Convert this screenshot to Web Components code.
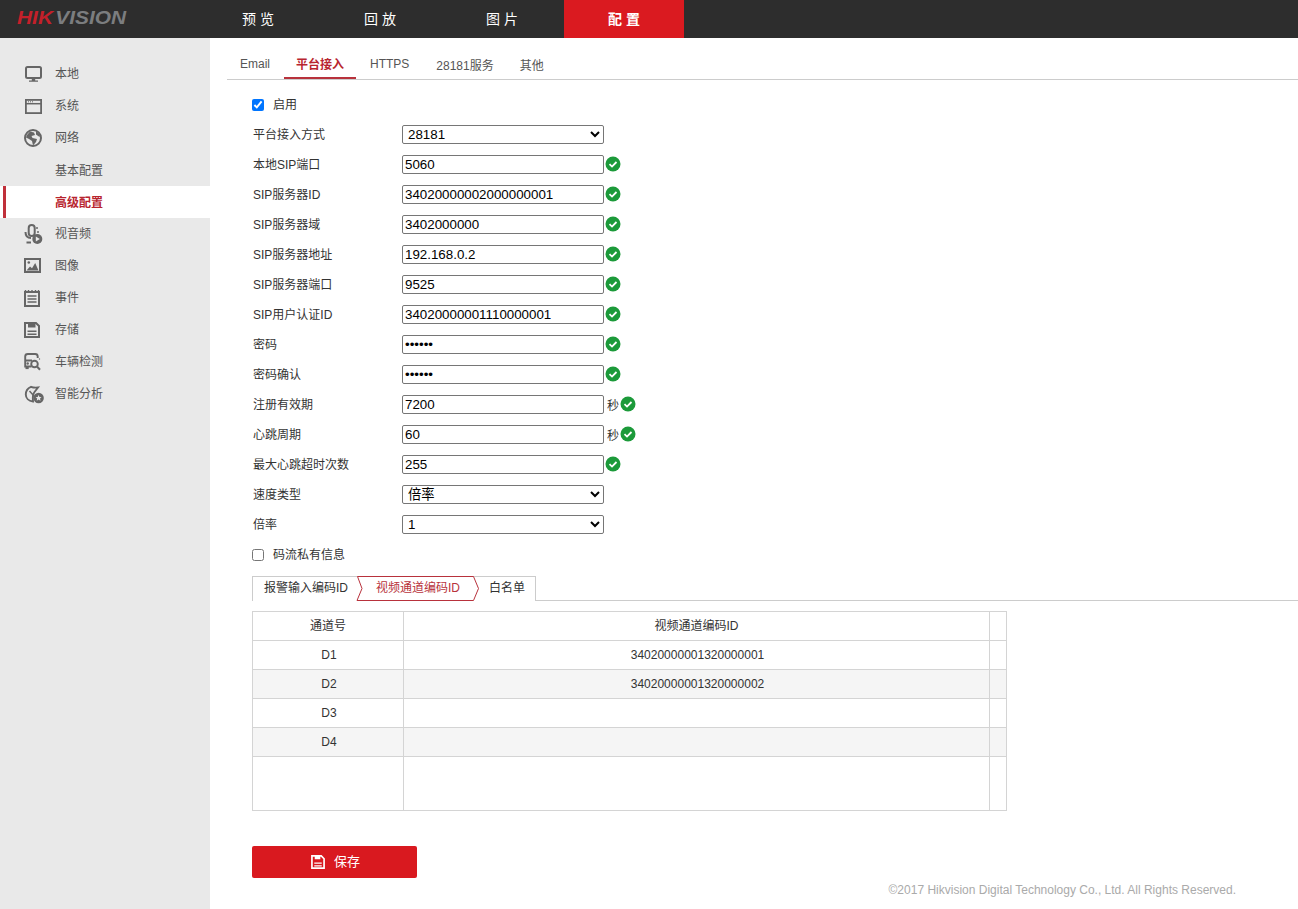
<!DOCTYPE html>
<html lang="zh">
<head>
<meta charset="utf-8">
<title>配置</title>
<style>
  html, body { margin: 0; height: 100%; background: #fff; overflow: hidden; }
  body {
    font: 12px "Liberation Sans", "Noto Sans CJK SC", sans-serif;
    color: #333;
  }
</style>
</head>
<body>
<hk-app></hk-app>

<script>
const ICONS = {
  local: `<rect x="2" y="5" width="15" height="11" rx="1.5" fill="none" stroke="#666" stroke-width="2"/><path d="M7.800 17h3.400v1.500H7.800zM5 18.400h9v1.400H5z" fill="#666"/>`,
  system: `<rect x="1.900" y="5.900" width="15.200" height="13.200" fill="none" stroke="#666" stroke-width="1.800"/><path d="M2 9.700h15" stroke="#666" stroke-width="1.500"/><path d="M4 7.800h1M6 7.800h1M8 7.800h1" stroke="#666"/>`,
  network: `<circle cx="9" cy="12" r="8" fill="none" stroke="#666" stroke-width="2"/><path d="M3 9l3-3.500 4 1 1 2.500-3.500 1 1 2 4.500 1-1 3-3 3.500-1-4.500-3-2-3-1.500zM12 5l4 3.500-.5 2.500-3.500-2.500z" fill="#666"/>`,
  av: `<rect x="4.700" y="2" width="6" height="11" rx="3" fill="none" stroke="#666" stroke-width="2"/><path d="M1.500 9c0 4.500 2.500 6 5.500 6M2.500 19.500H7" fill="none" stroke="#666" stroke-width="2"/><circle cx="13" cy="5" r="1" fill="#666"/><circle cx="14" cy="9" r="1" fill="#666"/><circle cx="13.300" cy="16" r="5" fill="#666"/><path d="M11.800 13.400v5.200l4-2.600z" fill="#e9e9e9"/>`,
  image: `<rect x="1" y="4" width="15" height="13" fill="none" stroke="#666" stroke-width="2"/><path d="M2.500 15.500l3.500-4 2 1.800 3.200-5.300 3.300 7.500z" fill="#666"/><circle cx="4.800" cy="7.500" r="1.300" fill="#666"/>`,
  event: `<rect x="1" y="5" width="14" height="14" fill="none" stroke="#666" stroke-width="2"/><path d="M3.500 9h9M3.500 12h9M3.500 15h9" stroke="#666" stroke-width="1.400"/><path d="M1.500 3v2M4.500 3v2M8 3v2M11.500 3v2M14.500 3v2" stroke="#666" stroke-width="1.400"/>`,
  storage: `<path d="M1 4h11l3 3v11H1z" fill="none" stroke="#666" stroke-width="2"/><path d="M4 4h7.500v4.500H4zM3.500 11.500h9V13h-9zM3.500 14.500h9V16h-9z" fill="#666"/>`,
  vehicle: `<path d="M7.500 15.500H1.200V5.500C1.200 4 2.400 3 3.800 3h7.400c1.400 0 2.500 1 2.500 2.500V7M1.500 9.500H8" fill="none" stroke="#666" stroke-width="1.900"/><circle cx="3.700" cy="12.500" r="1.200" fill="#666"/><path d="M1.500 15.500h3.200v2.600H1.500z" fill="#666"/><circle cx="10.500" cy="13" r="3.300" fill="none" stroke="#666" stroke-width="1.900"/><path d="M13 15.500l3 3.200" stroke="#666" stroke-width="2"/><circle cx="15.500" cy="8" r=".7" fill="#666"/>`,
  smart: `<path d="M9 18.500C4.500 18 1.800 15 1.800 11.500 1.800 8 4 5 7 3.800c2.500 1 4.500 1 7 .7L10.500 9C9 11 8.500 14 9 18.500z" fill="none" stroke="#666" stroke-width="1.900"/><path d="M5.500 8l4.500 5" stroke="#666" stroke-width="1.500"/><circle cx="14.600" cy="15" r="5.200" fill="#666"/><path d="M14.600 12l.9 2 2.100.2-1.600 1.400.5 2.100-1.900-1.100-1.900 1.100.5-2.100-1.600-1.400 2.100-.2z" fill="#e9e9e9"/>`,
};

class HkApp extends HTMLElement {
  constructor() {
    super();
    this.attachShadow({ mode: 'open' }).innerHTML = `
      <style>
        :host { display: flex; flex-direction: column; height: 909px; }
        .body { display: flex; flex: 1; min-height: 0; }
      </style>
      <hk-header></hk-header>
      <div class="body">
        <hk-sidebar></hk-sidebar>
        <hk-content></hk-content>
      </div>`;
  }
}

class HkHeader extends HTMLElement {
  constructor() {
    super();
    const items = ['预览', '回放', '图片', '配置'];
    this.attachShadow({ mode: 'open' }).innerHTML = `
      <style>
        :host { display: flex; height: 38px; background: #2d2d2d; flex: none; }
        .logo {
          width: 198px; padding: 0 0 0 17px; box-sizing: border-box; flex: none;
          font: italic bold 18.500px/36px "Liberation Sans", sans-serif;
          color: #c4202a; white-space: nowrap;
        }
        .logo div { transform: scaleX(1.13); transform-origin: left center; }
        .logo span { color: #7b7d7f; margin-left: 2px; }
        nav { display: flex; gap: 2px; }
        a {
          width: 120px; box-sizing: border-box; padding-left: 4px; text-align: center; line-height: 38px;
          color: #fff; font-size: 14px; letter-spacing: 4px;
        }
        a.on { background: #da1a20; font-weight: bold; }
      </style>
      <div class="logo"><div>HIK<span>VISION</span></div></div>
      <nav>${items.map((t, i) => `<a class="${i === 3 ? 'on' : ''}">${t}</a>`).join('')}</nav>`;
  }
}

class HkSideItem extends HTMLElement {
  constructor() {
    super();
    const icon = this.getAttribute('icon');
    this.attachShadow({ mode: 'open' }).innerHTML = `
      <style>
        :host {
          display: flex; align-items: center; height: 32px; box-sizing: border-box;
          padding: 0 0 2px 55px; position: relative; color: #555; font-size: 12px;
        }
        :host([raised]) { padding-bottom: 4px; }
        :host([active]) { background: #fff; color: #b8252f; font-weight: bold; }
        :host([active])::before {
          content: ''; position: absolute; left: 3px; top: 0; bottom: 0; width: 3px; background: #c0303a;
        }
        svg { position: absolute; left: 24px; top: 5px; }
      </style>
      ${icon ? `<svg width="21" height="21" viewBox="0 0 21 21">${ICONS[icon]}</svg>` : ''}
      <slot></slot>`;
  }
}

class HkSidebar extends HTMLElement {
  constructor() {
    super();
    this.attachShadow({ mode: 'open' }).innerHTML = `
      <style>
        :host { display: block; width: 210px; flex: none; background: #e9e9e9; padding-top: 19px; box-sizing: border-box; }
        .sub { margin-top: 1px; }
      </style>
      <hk-side-item icon="local">本地</hk-side-item>
      <hk-side-item icon="system">系统</hk-side-item>
      <hk-side-item icon="network">网络</hk-side-item>
      <div class="sub">
        <hk-side-item>基本配置</hk-side-item>
        <hk-side-item active>高级配置</hk-side-item>
      </div>
      <hk-side-item raised icon="av">视音频</hk-side-item>
      <hk-side-item raised icon="image">图像</hk-side-item>
      <hk-side-item raised icon="event">事件</hk-side-item>
      <hk-side-item raised icon="storage">存储</hk-side-item>
      <hk-side-item raised icon="vehicle">车辆检测</hk-side-item>
      <hk-side-item raised icon="smart">智能分析</hk-side-item>`;
  }
}

class HkTabs extends HTMLElement {
  constructor() {
    super();
    this.attachShadow({ mode: 'open' }).innerHTML = `
      <style>
        :host { display: flex; height: 42px; margin-left: 17px; border-bottom: 1px solid #ccc; box-sizing: border-box; color: #555; }
        span { padding: 19px 13px 0 13px; box-sizing: border-box; height: 41px; white-space: nowrap; }
        .email { width: 57px; }
        .on { width: 72px; padding: 17px 0 0 12px; color: #b8252f; font-weight: bold; border-bottom: 2px solid #b8323c; }
        .https { padding-left: 14px; }
        .low { padding: 18px 13px 0 14px; }
        .last { padding-left: 13px; }
      </style>
      <span class="email">Email</span>
      <span class="on">平台接入</span>
      <span class="https">HTTPS</span>
      <span class="low">28181服务</span>
      <span class="low last">其他</span>`;
  }
}

class HkRow extends HTMLElement {
  constructor() {
    super();
    const label = this.getAttribute('label');
    const type = this.getAttribute('type') || 'text';
    const value = this.getAttribute('value') || '';
    const unit = this.getAttribute('unit');
    const check = `<svg width="16" height="16" viewBox="0 0 16 16"><circle cx="8" cy="8" r="7.500" fill="#1c9a3a"/><path d="M4.500 8.200l2.500 2.400 4.500-4.600" fill="none" stroke="#fff" stroke-width="1.800"/></svg>`;
    let field;
    if (type === 'select') {
      field = `<select><option>${value}</option></select>`;
    } else {
      field = `<input type="${type}" value="${value}">`;
    }
    this.attachShadow({ mode: 'open' }).innerHTML = `
      <style>
        :host { display: flex; align-items: center; height: 30px; color: #333; }
        label { width: 149px; margin: 0 0 2px 1px; flex: none; white-space: nowrap; }
        input, select {
          font: 13.333px "Liberation Sans", "Noto Sans CJK SC", sans-serif;
          width: 202px; height: 19px; box-sizing: border-box; margin: 0;
          color: #000; background: #fff; border: 1px solid #767676; border-radius: 2px;
        }
        input { padding: 0 2px; }
        select { padding: 0 0 0 1px; }
        .unit { margin-left: 3px; }
        svg { flex: none; margin-left: 1px; }
      </style>
      <label>${label}</label>
      ${field}
      ${unit ? `<span class="unit">${unit}</span>` : ''}
      ${type === 'select' ? '' : check}`;
  }
}

class HkCheck extends HTMLElement {
  constructor() {
    super();
    this.attachShadow({ mode: 'open' }).innerHTML = `
      <style>
        :host { display: flex; align-items: center; height: 30px; color: #333; }
        input { margin: 2px 9px 0 0; width: 12px; height: 12px; accent-color: #0075ff; }
        span { margin-bottom: 2px; }
      </style>
      <input type="checkbox" ${this.hasAttribute('checked') ? 'checked' : ''}>
      <span><slot></slot></span>`;
  }
}

class HkSubtabs extends HTMLElement {
  constructor() {
    super();
    this.attachShadow({ mode: 'open' }).innerHTML = `
      <style>
        :host { display: block; height: 25px; margin-top: 7px; border-bottom: 1px solid #ccc; box-sizing: border-box; position: relative; }
        .tabs {
          display: flex; width: 284px; height: 25px; box-sizing: border-box;
          border: 1px solid #ccc; border-bottom: 0; align-items: flex-start;
          background: #fff; color: #333; line-height: 23px;
        }
        span { white-space: nowrap; }
        .a { padding-left: 11px; width: 104px; box-sizing: border-box; }
        .b { padding-left: 19px; width: 132px; box-sizing: border-box; color: #b8323c; }
        svg { position: absolute; left: 104px; top: 0; pointer-events: none; }
      </style>
      <div class="tabs">
        <span class="a">报警输入编码ID</span>
        <span class="b">视频通道编码ID</span>
        <span>白名单</span>
      </div>
      <svg width="126" height="25" viewBox="0 0 126 25"><path d="M1.500.500H117.500L122.500 12.500 117.500 24.500H1L6 12.500z" fill="none" stroke="#b8323c"/></svg>`;
  }
}

class HkTable extends HTMLElement {
  constructor() {
    super();
    const rows = [['D1', '34020000001320000001'], ['D2', '34020000001320000002'], ['D3', ''], ['D4', '']];
    this.attachShadow({ mode: 'open' }).innerHTML = `
      <style>
        :host { display: block; width: 755px; margin-top: 10px; }
        table { border-collapse: collapse; table-layout: fixed; width: 754px; color: #333; }
        td, th { border: 1px solid #d4d4d4; padding: 0 0 0 2px; height: 28px; font-weight: normal; text-align: center; }
        th { height: 25px; padding: 0 0 3px; }
        tr.alt td { background: #f5f5f5; }
        tr.fill td { height: 53px; }
      </style>
      <table>
        <colgroup><col style="width:151px"><col style="width:586px"><col style="width:17px"></colgroup>
        <tr><th>通道号</th><th>视频通道编码ID</th><th></th></tr>
        ${rows.map((r, i) => `<tr class="${i % 2 ? 'alt' : ''}"><td>${r[0]}</td><td>${r[1]}</td><td></td></tr>`).join('')}
        <tr class="fill"><td></td><td></td><td></td></tr>
      </table>`;
  }
}

class HkSave extends HTMLElement {
  constructor() {
    super();
    this.attachShadow({ mode: 'open' }).innerHTML = `
      <style>
        :host {
          display: flex; align-items: center; justify-content: center; gap: 9px;
          width: 165px; height: 32px; box-sizing: border-box; padding-left: 2px;
          background: #d9191f; border-radius: 2px;
          color: #fff; font-size: 13px; margin-top: 35px;
        }
        svg { flex: none; }
        span { margin-bottom: 4px; }
      </style>
      <svg width="14" height="14" viewBox="0 0 15 15"><path d="M1 1h10l3 3v10H1z" fill="none" stroke="#fff" stroke-width="1.800"/><path d="M4 1h6v3.500H4zM3.500 8h8v1.300h-8zM3.500 11h8v1.300h-8z" fill="#fff"/></svg>
      <span><slot></slot></span>`;
  }
}

class HkContent extends HTMLElement {
  constructor() {
    super();
    this.attachShadow({ mode: 'open' }).innerHTML = `
      <style>
        :host { display: block; flex: 1; min-width: 0; }
        .form { padding: 9px 0 0 42px; }
        footer { margin: 5px 62px 0 0; text-align: right; color: #aaa; }
      </style>
      <hk-tabs></hk-tabs>
      <div class="form">
        <hk-check checked>启用</hk-check>
        <hk-row label="平台接入方式" type="select" value="28181"></hk-row>
        <hk-row label="本地SIP端口" value="5060"></hk-row>
        <hk-row label="SIP服务器ID" value="34020000002000000001"></hk-row>
        <hk-row label="SIP服务器域" value="3402000000"></hk-row>
        <hk-row label="SIP服务器地址" value="192.168.0.2"></hk-row>
        <hk-row label="SIP服务器端口" value="9525"></hk-row>
        <hk-row label="SIP用户认证ID" value="34020000001110000001"></hk-row>
        <hk-row label="密码" type="password" value="••••••"></hk-row>
        <hk-row label="密码确认" type="password" value="••••••"></hk-row>
        <hk-row label="注册有效期" value="7200" unit="秒"></hk-row>
        <hk-row label="心跳周期" value="60" unit="秒"></hk-row>
        <hk-row label="最大心跳超时次数" value="255"></hk-row>
        <hk-row label="速度类型" type="select" value="倍率"></hk-row>
        <hk-row label="倍率" type="select" value="1"></hk-row>
        <hk-check>码流私有信息</hk-check>
        <hk-subtabs></hk-subtabs>
        <hk-table></hk-table>
        <hk-save>保存</hk-save>
      </div>
      <footer>©2017 Hikvision Digital Technology Co., Ltd. All Rights Reserved.</footer>`;
  }
}

customElements.define('hk-side-item', HkSideItem);
customElements.define('hk-sidebar', HkSidebar);
customElements.define('hk-header', HkHeader);
customElements.define('hk-tabs', HkTabs);
customElements.define('hk-row', HkRow);
customElements.define('hk-check', HkCheck);
customElements.define('hk-subtabs', HkSubtabs);
customElements.define('hk-table', HkTable);
customElements.define('hk-save', HkSave);
customElements.define('hk-content', HkContent);
customElements.define('hk-app', HkApp);
</script>
</body>
</html>
